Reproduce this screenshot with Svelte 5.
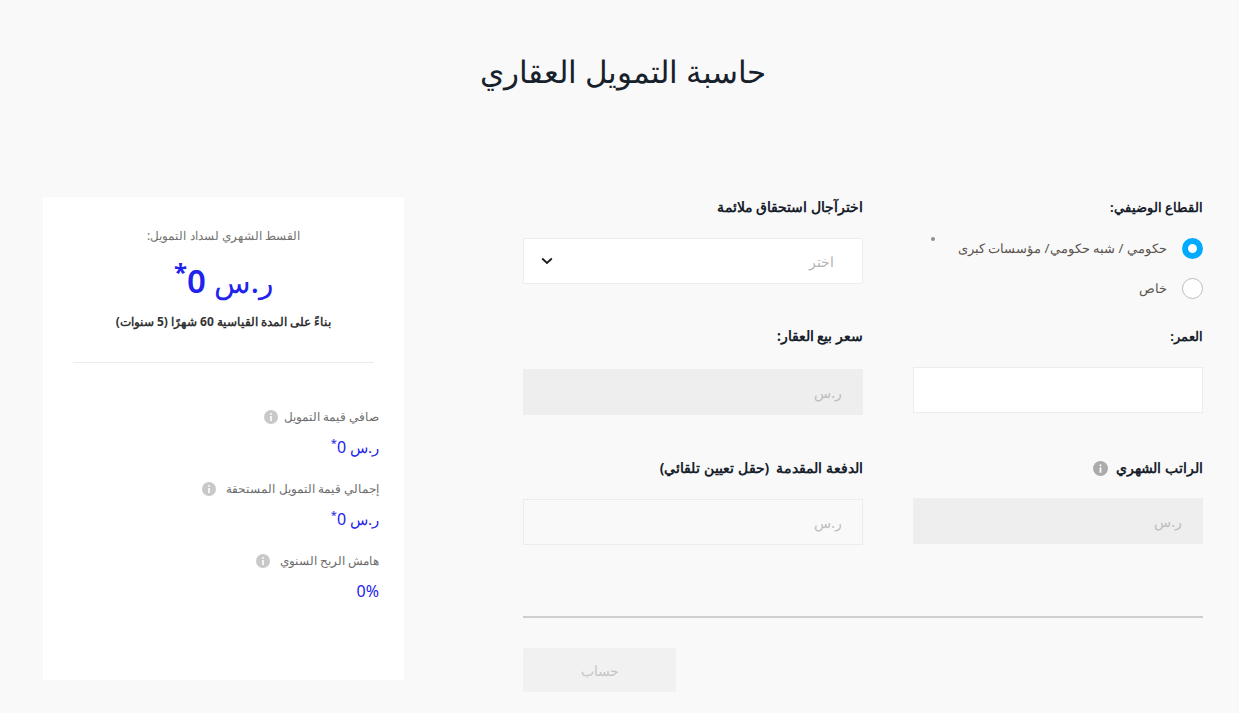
<script lang="ts">
	let sector = $state('gov');

	const results = [
		{ label: 'صافي قيمة التمويل', value: 'ر.س ', num: '0', star: true },
		{ label: 'إجمالي قيمة التمويل المستحقة', value: 'ر.س ', num: '0', star: true },
		{ label: 'هامش الربح السنوي', value: '', num: '0%', star: false }
	];
</script>

{#snippet info(cls = '')}
	<svg class="info {cls}" viewBox="0 0 14 14" aria-hidden="true">
		<circle cx="7" cy="7" r="7" />
		<rect x="6.2" y="6" width="1.6" height="5" fill="#fff" />
		<rect x="6.2" y="3.2" width="1.6" height="1.7" fill="#fff" />
	</svg>
{/snippet}

<main dir="rtl">
	<h1>حاسبة التمويل العقاري</h1>

	<div class="layout">
		<form class="form" onsubmit={(e) => e.preventDefault()}>
			<div class="grid">
				<div class="field sector">
					<span class="label">القطاع الوضيفي:</span>
					<label class="radio">
						<input type="radio" bind:group={sector} value="gov" />
						<span class="radio-text">حكومي / شبه حكومي/ مؤسسات كبرى</span>
						<span class="dot"></span>
					</label>
					<label class="radio">
						<input type="radio" bind:group={sector} value="private" />
						<span class="radio-text">خاص</span>
					</label>
				</div>

				<div class="field term">
					<span class="label">اخترآجال استحقاق ملائمة</span>
					<div class="select">
						<span>اختر</span>
						<svg viewBox="0 0 12 8" width="12" height="8" aria-hidden="true">
							<path d="M1.2 1.5 6 6l4.8-4.5" fill="none" stroke="#1a1a1a" stroke-width="1.8" />
						</svg>
					</div>
				</div>

				<div class="field age">
					<span class="label">العمر:</span>
					<input class="input" type="text" />
				</div>

				<div class="field price">
					<span class="label">سعر بيع العقار:</span>
					<input class="input disabled" type="text" placeholder="ر.س" disabled />
				</div>

				<div class="field salary">
					<span class="label">الراتب الشهري {@render info('label-info')}</span>
					<input class="input disabled" type="text" placeholder="ر.س" disabled />
				</div>

				<div class="field down">
					<span class="label">الدفعة المقدمة &nbsp;(حقل تعيين تلقائي)</span>
					<input class="input outlined" type="text" placeholder="ر.س" />
				</div>
			</div>

			<hr class="rule" />
			<button class="submit" type="submit" disabled>حساب</button>
		</form>

		<aside class="summary">
			<p class="summary-title">القسط الشهري لسداد التمويل:</p>
			<p class="amount">ر.س <span class="num">0</span><sup>*</sup></p>
			<p class="note">بناءً على المدة القياسية 60 شهرًا (5 سنوات)</p>
			<hr class="divider" />
			<ul class="results">
				{#each results as row}
					<li>
						<span class="result-label">{row.label} {@render info()}</span>
						<span class="result-value">{row.value}<span class="num">{row.num}</span>{#if row.star}<sup>*</sup>{/if}</span>
					</li>
				{/each}
			</ul>
		</aside>
	</div>
</main>

<style>
	:global(body) {
		background: #f9f9f9;
		font-family: 'Noto Sans', sans-serif;
	}

	main {
		height: 713px;
		overflow: hidden;
		box-sizing: border-box;
		padding: 50px 36px 0 43px;
	}

	h1 {
		margin: 0 0 104px;
		height: 43px;
		font-size: 31px;
		font-weight: 400;
		line-height: 43px;
		text-align: center;
		color: #17212b;
	}

	.layout {
		display: flex;
		justify-content: space-between;
		align-items: flex-start;
	}

	.form {
		width: 680px;
	}

	.grid {
		display: grid;
		grid-template-columns: 290px 340px;
		column-gap: 50px;
		grid-template-rows: 130px 131px 158px;
	}

	.field {
		display: flex;
		flex-direction: column;
		align-items: stretch;
		padding-top: 3px;
	}

	.age,
	.price {
		padding-top: 2px;
	}

	.label {
		display: flex;
		align-items: center;
		gap: 8px;
		height: 14px;
		margin-bottom: 24px;
		font-size: 13px;
		font-weight: 700;
		line-height: 14px;
		color: #17212b;
	}

	.term .label,
	.price .label,
	.down .label {
		font-size: 13.8px;
	}

	.salary .label {
		font-size: 13.5px;
		margin-bottom: 23px;
	}

	.price .label {
		margin-bottom: 26px;
	}

	.sector .label {
		margin-bottom: 14px;
	}

	.radio {
		display: flex;
		align-items: center;
		gap: 15px;
		height: 40px;
		position: relative;
		font-size: 13.4px;
		color: #5c5650;
	}

	.radio input {
		appearance: none;
		margin: 0;
		width: 21px;
		height: 21px;
		flex: none;
		border-radius: 50%;
		border: 1px solid #bdbdbd;
		background: #fff;
	}

	.radio input:checked {
		border: 6px solid #00aaff;
	}

	.dot {
		position: absolute;
		left: 18px;
		top: 9px;
		width: 4px;
		height: 4px;
		border-radius: 50%;
		background: #8f8f96;
	}

	.select {
		display: flex;
		justify-content: space-between;
		align-items: center;
		height: 46px;
		box-sizing: border-box;
		padding: 0 28px 0 17px;
		background: #fff;
		border: 1px solid #ececec;
		border-radius: 2px;
		font-size: 14px;
		color: #b5b5b5;
	}

	.input {
		display: block;
		width: 100%;
		height: 46px;
		box-sizing: border-box;
		padding: 0 20px;
		background: #fff;
		border: 1px solid #ececec;
		font: inherit;
		font-size: 14.2px;
		text-align: right;
		outline: none;
	}

	.input::placeholder {
		color: #bcbcbc;
		opacity: 1;
	}

	.disabled {
		background: #eeeeee;
		border-color: #eeeeee;
	}

	.outlined {
		background: transparent;
	}

	.info {
		width: 14px;
		height: 14px;
		flex: none;
		fill: #c8c8c8;
	}

	.label-info {
		width: 15px;
		height: 15px;
		fill: #ababab;
	}

	.rule {
		margin: 0;
		border: 0;
		height: 2px;
		background: #cfcfcf;
	}

	.submit {
		display: block;
		width: 153px;
		height: 44px;
		margin: 30px auto 0 0;
		padding: 0;
		border: 0;
		border-radius: 2px;
		background: #f1f1f1;
		font: inherit;
		font-size: 14px;
		color: #c4c4c4;
	}

	.summary {
		width: 361px;
		height: 483px;
		box-sizing: border-box;
		padding: 31px 30px 0;
		background: #fff;
	}

	.summary p {
		margin: 0;
		text-align: center;
	}

	.summary-title {
		font-size: 12.2px;
		line-height: 15px;
		color: #73736f;
	}

	.amount {
		margin-top: 13px !important;
		font-size: 30px;
		font-weight: 500;
		line-height: 50px;
		color: #2222ee;
	}

	.amount .num {
		font-size: 33px;
		font-weight: 600;
	}

	.amount sup {
		font-size: 24px;
		font-weight: 700;
		line-height: 0;
		vertical-align: 12px;
	}

	.note {
		margin-top: 7px !important;
		font-size: 12px;
		font-weight: 700;
		line-height: 16px;
		color: #333;
	}

	.divider {
		margin: 32px 0 0;
		border: 0;
		height: 1px;
		background: #ebebeb;
	}

	.results {
		list-style: none;
		margin: 46px -5px 0;
		padding: 0;
		display: flex;
		flex-direction: column;
		gap: 24px;
	}

	.results li {
		display: flex;
		flex-direction: column;
		gap: 12px;
	}

	.result-label {
		display: flex;
		align-items: center;
		gap: 6px;
		height: 16px;
		font-size: 12.4px;
		line-height: 16px;
		color: #6d6d6d;
	}

	.results li:nth-child(n + 2) .result-label {
		gap: 10px;
	}

	.result-value {
		font-size: 15px;
		line-height: 20px;
		color: #2222ee;
	}

	.result-value .num {
		font-size: 16px;
	}

	.result-value sup {
		font-size: 11px;
		line-height: 0;
	}
</style>
